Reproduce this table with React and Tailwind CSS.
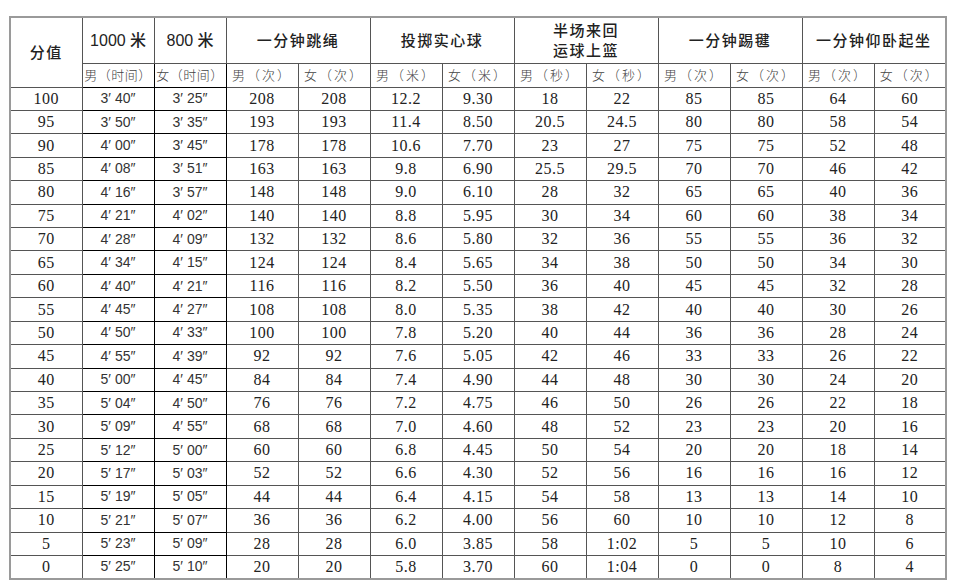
import React from "react";

const rows = [
  [100, "3′ 40″", "3′ 25″", 208, 208, "12.2", "9.30", 18, 22, 85, 85, 64, 60],
  [95, "3′ 50″", "3′ 35″", 193, 193, "11.4", "8.50", "20.5", "24.5", 80, 80, 58, 54],
  [90, "4′ 00″", "3′ 45″", 178, 178, "10.6", "7.70", 23, 27, 75, 75, 52, 48],
  [85, "4′ 08″", "3′ 51″", 163, 163, "9.8", "6.90", "25.5", "29.5", 70, 70, 46, 42],
  [80, "4′ 16″", "3′ 57″", 148, 148, "9.0", "6.10", 28, 32, 65, 65, 40, 36],
  [75, "4′ 21″", "4′ 02″", 140, 140, "8.8", "5.95", 30, 34, 60, 60, 38, 34],
  [70, "4′ 28″", "4′ 09″", 132, 132, "8.6", "5.80", 32, 36, 55, 55, 36, 32],
  [65, "4′ 34″", "4′ 15″", 124, 124, "8.4", "5.65", 34, 38, 50, 50, 34, 30],
  [60, "4′ 40″", "4′ 21″", 116, 116, "8.2", "5.50", 36, 40, 45, 45, 32, 28],
  [55, "4′ 45″", "4′ 27″", 108, 108, "8.0", "5.35", 38, 42, 40, 40, 30, 26],
  [50, "4′ 50″", "4′ 33″", 100, 100, "7.8", "5.20", 40, 44, 36, 36, 28, 24],
  [45, "4′ 55″", "4′ 39″", 92, 92, "7.6", "5.05", 42, 46, 33, 33, 26, 22],
  [40, "5′ 00″", "4′ 45″", 84, 84, "7.4", "4.90", 44, 48, 30, 30, 24, 20],
  [35, "5′ 04″", "4′ 50″", 76, 76, "7.2", "4.75", 46, 50, 26, 26, 22, 18],
  [30, "5′ 09″", "4′ 55″", 68, 68, "7.0", "4.60", 48, 52, 23, 23, 20, 16],
  [25, "5′ 12″", "5′ 00″", 60, 60, "6.8", "4.45", 50, 54, 20, 20, 18, 14],
  [20, "5′ 17″", "5′ 03″", 52, 52, "6.6", "4.30", 52, 56, 16, 16, 16, 12],
  [15, "5′ 19″", "5′ 05″", 44, 44, "6.4", "4.15", 54, 58, 13, 13, 14, 10],
  [10, "5′ 21″", "5′ 07″", 36, 36, "6.2", "4.00", 56, 60, 10, 10, 12, 8],
  [5, "5′ 23″", "5′ 09″", 28, 28, "6.0", "3.85", 58, "1:02", 5, 5, 10, 6],
  [0, "5′ 25″", "5′ 10″", 20, 20, "5.8", "3.70", 60, "1:04", 0, 0, 8, 4],
];

const cjk = "font-['Noto_Sans_CJK_SC',sans-serif]";
const serif = "font-['Liberation_Serif','Noto_Sans_CJK_SC',serif]";
const sans = "font-['Liberation_Sans','DejaVu_Sans','Noto_Sans_CJK_SC',sans-serif]";

const cell = "border border-[#555] text-center p-0";
const timeCell = "border border-black text-center p-0";

const subs = [
  "男（时间）",
  "女（时间）",
  "男（次）",
  "女（次）",
  "男（米）",
  "女（米）",
  "男（秒）",
  "女（秒）",
  "男（次）",
  "女（次）",
  "男（次）",
  "女（次）",
];

const head = `${cell} ${cjk} text-[15px] font-medium tracking-[1.5px]`;

export default function App() {
  return (
    <div className="w-[955px] h-[583px] bg-white pt-[16px] pl-[9px] overflow-hidden">
      <table className="w-[936px] table-fixed border-collapse border-2 border-[#9a9a9a] text-[#222]">
        <colgroup>
          {Array.from({ length: 13 }).map((_, i) => (
            <col key={i} className="w-[72px]" />
          ))}
        </colgroup>
        <thead>
          <tr className="h-[46px]">
            <th rowSpan={2} className={head}>
              分值
            </th>
            <th className={`${cell} text-[16px] font-normal`}>
              <span className={sans}>1000</span> <span className={`${cjk} font-medium`}>米</span>
            </th>
            <th className={`${cell} text-[16px] font-normal`}>
              <span className={sans}>800</span> <span className={`${cjk} font-medium`}>米</span>
            </th>
            <th colSpan={2} className={head}>
              一分钟跳绳
            </th>
            <th colSpan={2} className={head}>
              投掷实心球
            </th>
            <th colSpan={2} className={`${head} leading-[20px]`}>
              半场来回
              <br />
              运球上篮
            </th>
            <th colSpan={2} className={head}>
              一分钟踢毽
            </th>
            <th colSpan={2} className={head}>
              一分钟仰卧起坐
            </th>
          </tr>
          <tr className="h-[24px]">
            {subs.map((s, i) => (
              <th
                key={i}
                className={`${i < 2 ? timeCell + " tracking-[0.5px]" : cell + " tracking-[2px]"} ${cjk} text-[13px] font-light text-[#444] whitespace-nowrap`}
              >
                {s}
              </th>
            ))}
          </tr>
        </thead>
        <tbody>
          {rows.map((r, ri) => (
            <tr key={ri} className="h-[23.43px]">
              {r.map((v, ci) => (
                <td
                  key={ci}
                  className={
                    ci === 1 || ci === 2
                      ? `${timeCell} ${sans} text-[14px] text-[#333]`
                      : `${cell} ${serif} text-[16px] leading-[20px] tracking-[0.5px]`
                  }
                >
                  {v}
                </td>
              ))}
            </tr>
          ))}
        </tbody>
      </table>
    </div>
  );
}
